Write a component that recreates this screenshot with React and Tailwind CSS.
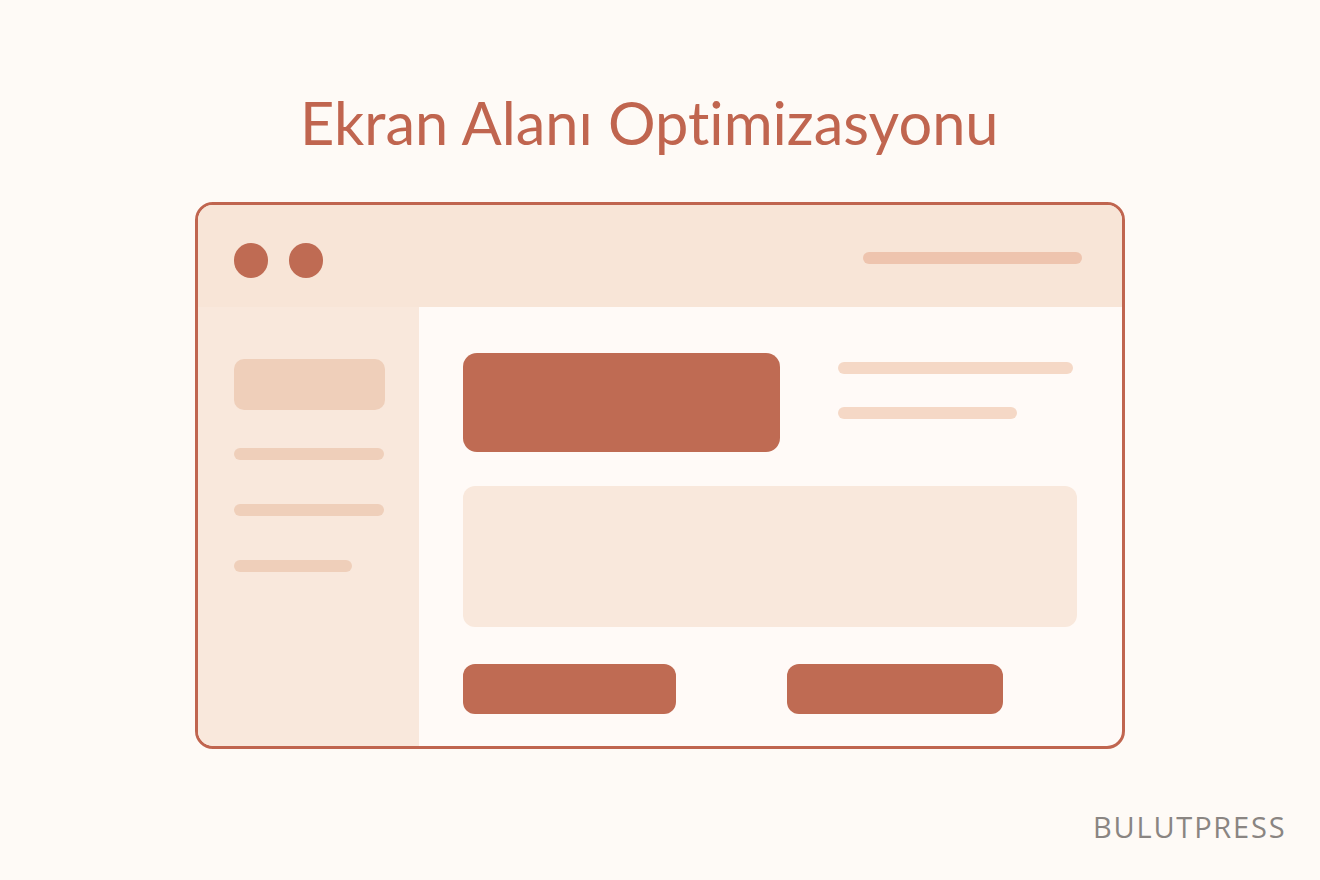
export default function App() {
  return (
    <div className="w-[1320px] h-[880px] bg-[#fefaf6] relative overflow-hidden" style={{ fontFamily: '"Open Sans", "Noto Sans", sans-serif' }}>
      <div className="pt-[83px] pl-[300px] h-[202px]">
        <h1 className="text-[59.5px] leading-[78px] text-[#c0654f] font-normal m-0 whitespace-nowrap [font-variant-ligatures:none]" style={{ fontFamily: 'Lato, "Open Sans", sans-serif' }}>Ekran Alanı Optimizasyonu</h1>
      </div>
      <div className="ml-[195px] w-[930px] h-[547px] border-[3px] border-[#c0654f] rounded-[18px] overflow-hidden flex flex-col bg-[#fffaf7]">
        <div className="h-[102px] bg-[#f8e5d7] flex items-start justify-between pl-[36px] pr-[40px]">
          <div className="flex gap-[21px] pt-[38px]">
            <div className="w-[34px] h-[35px] rounded-full bg-[#bf6b53]" />
            <div className="w-[34px] h-[35px] rounded-full bg-[#bf6b53]" />
          </div>
          <div className="mt-[47px] w-[219px] h-[12px] rounded-full bg-[#eec4ae]" />
        </div>
        <div className="flex flex-1">
          <div className="w-[221px] bg-[#f9e8dc] pl-[36px] pt-[52px] flex flex-col">
            <div className="w-[151px] h-[51px] rounded-[10px] bg-[#efcfba]" />
            <div className="mt-[38px] w-[150px] h-[12px] rounded-full bg-[#efcfba]" />
            <div className="mt-[44px] w-[150px] h-[12px] rounded-full bg-[#efcfba]" />
            <div className="mt-[44px] w-[118px] h-[12px] rounded-full bg-[#efcfba]" />
          </div>
          <div className="flex-1 pl-[44px] pt-[46px] flex flex-col">
            <div className="flex">
              <div className="w-[317px] h-[99px] rounded-[14px] bg-[#bf6b53]" />
              <div className="ml-[58px] pt-[9px] flex flex-col">
                <div className="w-[235px] h-[12px] rounded-full bg-[#f5d8c6]" />
                <div className="mt-[33px] w-[179px] h-[12px] rounded-full bg-[#f5d8c6]" />
              </div>
            </div>
            <div className="mt-[34px] w-[614px] h-[141px] rounded-[12px] bg-[#f9e8dc]" />
            <div className="mt-[37px] flex">
              <div className="w-[213px] h-[50px] rounded-[12px] bg-[#bf6b53]" />
              <div className="ml-[111px] w-[216px] h-[50px] rounded-[12px] bg-[#bf6b53]" />
            </div>
          </div>
        </div>
      </div>
      <div className="absolute left-[1093px] top-[808px] text-[29px] leading-[38px] tracking-[1.8px] text-[#8a8582]">BULUTPRESS</div>
    </div>
  );
}
